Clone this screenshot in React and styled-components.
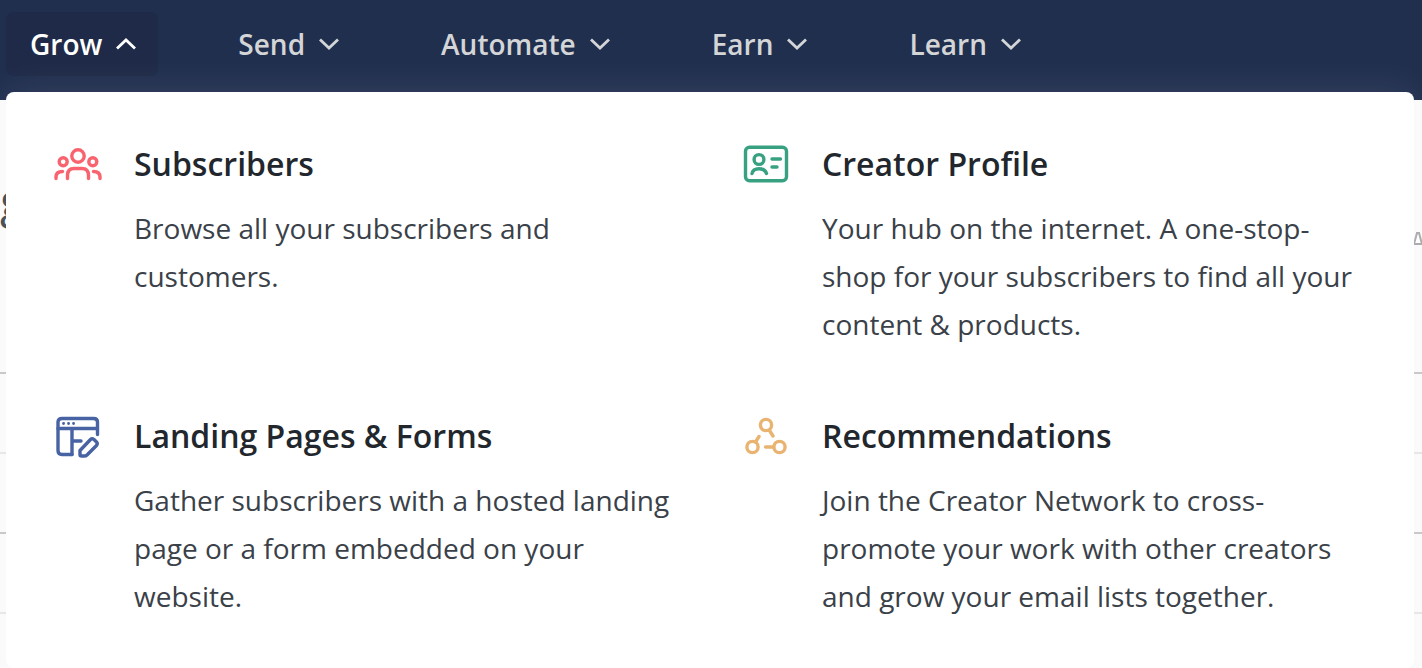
import React, { useState } from "react";
import styled, { createGlobalStyle } from "styled-components";

const GlobalStyle = createGlobalStyle`
  * {
    box-sizing: border-box;
  }
  body {
    margin: 0;
    background: #fafafa;
    font-family: "Open Sans", "Noto Sans", sans-serif;
  }
`;

const SubscribersIcon = () => (
  <Icon viewBox="0 0 48 48" color="#f9636f">
    <circle cx="24" cy="16" r="6.2" />
    <circle cx="9.200" cy="21.800" r="4" />
    <circle cx="38.800" cy="21.800" r="4" />
    <path d="M13.500 38.500V35.500Q13.500 28.500 20 28.500H28Q34.500 28.500 34.500 35.500V38.500" />
    <path d="M2 38.500V37Q2 31.500 8.500 31.500" />
    <path d="M46 38.500V37Q46 31.500 39.500 31.500" />
  </Icon>
);

const ProfileIcon = () => (
  <Icon viewBox="0 0 48 48" color="#38a181">
    <rect x="3.500" y="7.300" width="41" height="33.500" rx="4" />
    <circle cx="17" cy="19.500" r="4.900" />
    <path d="M10 33.500Q11 28.700 17 28.700Q23 28.700 24.500 33.500" />
    <path d="M30 19H38.500M30 27H35" />
  </Icon>
);

const FormsIcon = () => (
  <Icon viewBox="0 0 48 48" color="#4763a3">
    <path d="M18 42.500H8Q4 42.500 4 38.500V10Q4 6.500 8 6.500H39.500Q43.500 6.500 43.500 10V22.500" />
    <path d="M4 16.500H43.500M18 17V42.500M18 29H27" />
    <path d="M9.500 11.500H9.600M14.500 11.500H14.600M19.500 11.500H19.600" strokeWidth="2.800" />
    <path d="M26 38.500L36.500 27.500Q38 26 40 27.500L42.500 30Q44 31.500 42.500 33.500L33 43Q32 44 30 44H27.500Q26 44 26 42.500Z" />
  </Icon>
);

const RecommendationsIcon = () => (
  <Icon viewBox="0 0 48 48" color="#e9b472">
    <circle cx="24" cy="13" r="5.600" />
    <circle cx="10.500" cy="35" r="5.600" />
    <circle cx="37.500" cy="35" r="5.600" />
    <path d="M27.500 18.500L31 24M13.500 30L17 24.500M23.500 35H31.500" />
  </Icon>
);

const menus = ["Grow", "Send", "Automate", "Earn", "Learn"];

const links = [
  {
    title: "Subscribers",
    text: "Browse all your subscribers and customers.",
    icon: <SubscribersIcon />,
  },
  {
    title: "Creator Profile",
    text: "Your hub on the internet. A one-stop-shop for your subscribers to find all your content & products.",
    icon: <ProfileIcon />,
  },
  {
    title: "Landing Pages & Forms",
    text: "Gather subscribers with a hosted landing page or a form embedded on your website.",
    icon: <FormsIcon />,
  },
  {
    title: "Recommendations",
    text: "Join the Creator Network to cross-promote your work with other creators and grow your email lists together.",
    icon: <RecommendationsIcon />,
  },
];

export default function App() {
  const [open, setOpen] = useState("Grow");

  return (
    <Page>
      <GlobalStyle />
      <NavBar>
        {menus.map((name) => (
          <NavButton
            key={name}
            $active={open === name}
            aria-expanded={open === name}
            onClick={() => setOpen(open === name ? "" : name)}
          >
            {name}
            <Chevron viewBox="0 0 22 12" $up={open === name} aria-hidden="true">
              <path d="M2 1.500L11 10L20 1.500" />
            </Chevron>
          </NavButton>
        ))}
      </NavBar>
      <Backdrop aria-hidden="true">
        <BackdropHead>
          <BackdropTitle>g</BackdropTitle>
          <BackdropMark viewBox="0 0 10 14">
            <path d="M1 13L4 2H6L9 13Z" />
          </BackdropMark>
        </BackdropHead>
        <Row $strong />
        <Row />
        <Row $strong />
        <Row />
      </Backdrop>
      {open === "Grow" && (
        <Dropdown>
          {links.map((link) => (
            <Item key={link.title} href="#">
              {link.icon}
              <div>
                <Title>{link.title}</Title>
                <Text>{link.text}</Text>
              </div>
            </Item>
          ))}
        </Dropdown>
      )}
    </Page>
  );
}

const Page = styled.div`
  position: relative;
  min-height: 100vh;
`;

const NavBar = styled.nav`
  display: flex;
  align-items: flex-start;
  gap: 56px;
  height: 100px;
  padding: 12px 6px;
  background: #212f4f;
`;

const NavButton = styled.button`
  display: flex;
  align-items: center;
  gap: 13px;
  height: 64px;
  padding: 0 21px 0 24px;
  border: 0;
  border-radius: 8px;
  background: ${(props) => (props.$active ? "#1e2a47" : "transparent")};
  color: ${(props) => (props.$active ? "#ffffff" : "#d3d5d7")};
  font-family: inherit;
  font-size: 28px;
  font-weight: 600;
  line-height: 40px;
  cursor: pointer;
`;

const Chevron = styled.svg`
  width: 22px;
  height: 12px;
  fill: none;
  stroke: currentColor;
  stroke-width: 2.8;
  transform: ${(props) => (props.$up ? "rotate(180deg)" : "none")};
`;

const Backdrop = styled.div`
  display: flex;
  flex-direction: column;
  overflow: hidden;
`;

const BackdropHead = styled.div`
  display: flex;
  align-items: center;
  justify-content: space-between;
  height: 272px;
  padding-bottom: 72px;
`;

const BackdropTitle = styled.span`
  color: #434a52;
  font-size: 48px;
  font-weight: 500;
  line-height: 64px;
`;

const BackdropMark = styled.svg`
  width: 10px;
  height: 14px;
  margin: 76px -1px 0 0;
  fill: #ffffff;
  stroke: #a7a9ab;
  stroke-width: 2;
`;

const Row = styled.div`
  height: 80px;
  border-top: 2px solid ${(props) => (props.$strong ? "#c6c7c8" : "#e6e6e6")};

  &:last-child {
    height: 48px;
  }
`;

const Dropdown = styled.div`
  position: absolute;
  top: 92px;
  left: 6px;
  right: 8px;
  display: grid;
  grid-template-columns: 1fr 1fr;
  gap: 64px;
  padding: 48px;
  border-radius: 8px;
  background: #ffffff;
  box-shadow: 0 0 40px rgba(255, 255, 255, 0.1);
`;

const Item = styled.a`
  display: flex;
  align-items: flex-start;
  gap: 32px;
  color: inherit;
  text-decoration: none;
`;

const Icon = styled.svg`
  flex: none;
  width: 48px;
  height: 48px;
  fill: none;
  stroke: ${(props) => props.color};
  stroke-width: 3.4;
  stroke-linecap: round;
  stroke-linejoin: round;
`;

const Title = styled.h2`
  margin: 0 0 16px;
  color: #22272d;
  font-size: 32px;
  font-weight: 600;
  line-height: 48px;
`;

const Text = styled.p`
  margin: 0;
  color: #3a4148;
  font-size: 28px;
  line-height: 48px;
`;
